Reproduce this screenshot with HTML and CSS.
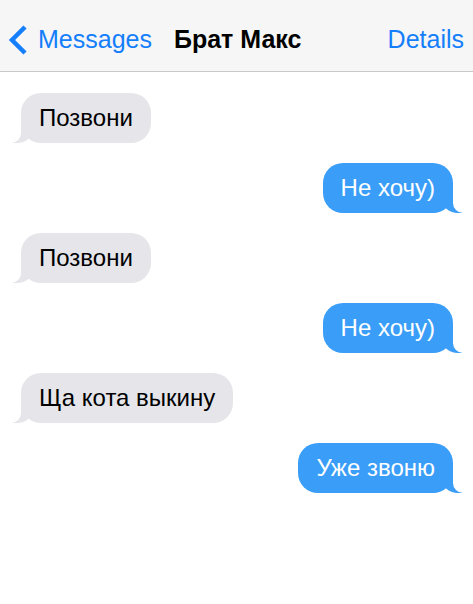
FILE: index.html
```html
<!DOCTYPE html>
<html lang="ru">
<head>
    <meta charset="UTF-8">
    <meta name="viewport" content="width=device-width, initial-scale=1.0">
    <title>Брат Макс</title>
    <link rel="stylesheet" href="styles.css">
</head>
<body>
    <div class="header">
        <a class="back" href="#">
            <svg class="chevron" width="20" height="30" viewBox="0 0 20 30">
                <path d="M17 2 L4 15 L17 28" fill="none" stroke="#147efb" stroke-width="4.5"/>
            </svg>
            Messages
        </a>
        <div class="title">Брат Макс</div>
        <a class="details" href="#">Details</a>
    </div>

    <div class="chat">
        <div class="bubble them">Позвони</div>
        <div class="bubble me">Не хочу)</div>
        <div class="bubble them">Позвони</div>
        <div class="bubble me">Не хочу)</div>
        <div class="bubble them">Ща кота выкину</div>
        <div class="bubble me">Уже звоню</div>
    </div>
</body>
</html>
```

FILE: styles.css
```css
body{
    margin: 0;
    background-color: white;
    font-family: 'Liberation Sans', Arial, sans-serif;
}
.header{
    display: flex;
    align-items: center;
    height: 63px;
    padding: 8px 9px 0 8px;
    background-color: #f6f6f6;
    border-bottom: 1px solid #c9c9c9;
    font-size: 25px;
}
.back{
    display: flex;
    align-items: center;
    gap: 10px;
    color: #147efb;
    text-decoration: none;
}
.chevron{
    display: block;
    margin-top: 1px;
}
.title{
    margin-left: 22px;
    font-weight: bold;
    color: black;
}
.details{
    margin-left: auto;
    color: #147efb;
    text-decoration: none;
}
.chat{
    display: flex;
    flex-direction: column;
    gap: 20px;
    padding: 21px 20px 0 21px;
}
.bubble{
    position: relative;
    font-size: 24px;
    line-height: 27px;
    padding: 11px 18px 12px 18px;
    border-radius: 20px;
}
.them{
    align-self: flex-start;
    background-color: #e5e5ea;
    color: black;
}
.me{
    align-self: flex-end;
    background-color: #3a9ef8;
    color: white;
}
.bubble::before,
.bubble::after{
    content: "";
    position: absolute;
    bottom: 0;
    height: 20px;
}
.them::before{
    left: -8px;
    width: 20px;
    background-color: #e5e5ea;
    border-bottom-right-radius: 16px 14px;
}
.them::after{
    left: -10px;
    width: 10px;
    background-color: white;
    border-bottom-right-radius: 10px;
}
.me::before{
    right: -9px;
    width: 20px;
    background-color: #3a9ef8;
    border-bottom-left-radius: 16px 14px;
}
.me::after{
    right: -10px;
    width: 10px;
    background-color: white;
    border-bottom-left-radius: 10px;
}
```
